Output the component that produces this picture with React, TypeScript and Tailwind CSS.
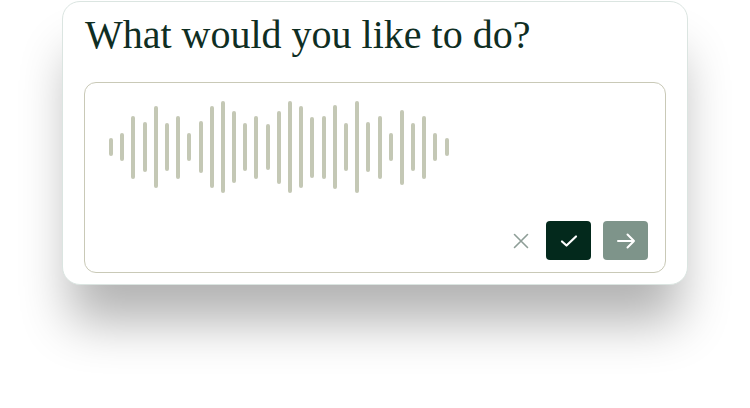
import React from "react";

const heights = [18, 28, 63, 50, 82, 48, 63, 28, 52, 82, 92, 72, 48, 63, 46, 73, 92, 82, 61, 63, 84, 48, 92, 50, 63, 28, 75, 48, 63, 28, 18];

export default function App() {
  return (
    <div className="w-[750px] h-[408px] bg-white overflow-hidden pt-[1px]">
      <div className="ml-[62px] w-[626px] h-[284px] bg-white border border-[#dbe5e1] rounded-[18px] shadow-[0_45px_50px_-8px_rgba(0,0,0,0.3)] px-[21px] pt-[10px]">
        <h1
          className="text-[40px] leading-[46px] text-[#0f2e23] pl-[1px]"
          style={{ fontFamily: '"Liberation Serif", serif' }}
        >
          What would you like to do?
        </h1>
        <div className="mt-[24px] w-[582px] h-[191px] border border-[#c9c9b7] rounded-[12px] flex flex-col pl-[24px] pr-[17px] pt-[18px] pb-[12px]">
          <div className="flex items-center gap-[7.2px] h-[92px]">
            {heights.map((h, i) => (
              <div key={i} className="w-[4px] rounded-full bg-[#c4c8b5]" style={{ height: `${h}px` }} />
            ))}
          </div>
          <div className="mt-auto flex items-center justify-end">
            <svg width="16" height="16" viewBox="0 0 16 16" className="mr-[17px]" fill="none" stroke="#8e9e97" strokeWidth="1.6" strokeLinecap="round">
              <path d="M1.5 1.5 L14.5 14.5 M14.5 1.5 L1.5 14.5" />
            </svg>
            <button className="w-[45px] h-[39px] rounded-[4px] bg-[#03291c] flex items-center justify-center">
              <svg width="18" height="14" viewBox="0 0 18 14" fill="none" stroke="#ffffff" strokeWidth="2.2" strokeLinecap="round" strokeLinejoin="round">
                <path d="M2 7.5 L6.5 11.5 L16 2.5" />
              </svg>
            </button>
            <button className="ml-[12px] w-[45px] h-[39px] rounded-[4px] bg-[#7e948a] flex items-center justify-center">
              <svg width="20" height="16" viewBox="0 0 20 16" fill="none" stroke="#ffffff" strokeWidth="2" strokeLinecap="round" strokeLinejoin="round">
                <path d="M2 8 H18 M11.5 1.5 L18 8 L11.5 14.5" />
              </svg>
            </button>
          </div>
        </div>
      </div>
    </div>
  );
}
